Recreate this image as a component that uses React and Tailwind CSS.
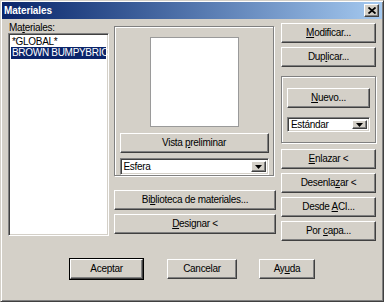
const BTN =
  "flex items-center justify-center bg-[#d4d0c8] border border-t-white border-l-white border-r-[#404040] border-b-[#404040] shadow-[inset_-1px_-1px_#808080] text-[10px] tracking-[-0.3px] leading-none text-black";
const SUNKEN =
  "border border-t-[#808080] border-l-[#808080] border-r-white border-b-white shadow-[inset_1px_1px_#404040,inset_-1px_-1px_#d4d0c8]";
const GROUP = "border border-[#808080] shadow-[inset_1px_1px_#ffffff,1px_1px_#ffffff]";

function U({ children }) {
  return <span className="underline underline-offset-[1px]">{children}</span>;
}

function Button({ className = "", children }) {
  return (
    <div className={`${BTN} ${className}`}>
      <span className="whitespace-pre">{children}</span>
    </div>
  );
}

function Combo({ className = "", value }) {
  return (
    <div className={`${SUNKEN} bg-white flex items-stretch p-[2px] ${className}`}>
      <div className="flex-1 flex items-center pl-[1px] text-[10px] tracking-[-0.3px] leading-none text-black">
        {value}
      </div>
      <div className="w-[15px] bg-[#d4d0c8] border border-t-white border-l-white border-r-[#404040] border-b-[#404040] shadow-[inset_-1px_-1px_#808080] flex items-center justify-center">
        <svg width="7" height="4" viewBox="0 0 7 4">
          <path d="M0 0H7L3.5 4Z" fill="#000" />
        </svg>
      </div>
    </div>
  );
}

export default function App() {
  return (
    <div
      className="w-[384px] h-[302px] bg-[#d4d0c8] border border-t-[#d4d0c8] border-l-[#d4d0c8] border-r-[#404040] border-b-[#404040] shadow-[inset_1px_1px_#ffffff,inset_-1px_-1px_#808080] p-[1px] flex flex-col overflow-hidden"
      style={{ fontFamily: '"Liberation Sans", Arial, sans-serif' }}
    >
      {/* Title bar */}
      <div className="h-[17px] bg-gradient-to-r from-[#0a246a] to-[#a6caf0] flex items-center justify-between pl-[2px] pr-[3px]">
        <span className="text-white font-bold text-[10px] tracking-[-0.1px] leading-none">Materiales</span>
        <div className="w-[15px] h-[13px] bg-[#d4d0c8] border border-t-white border-l-white border-r-[#404040] border-b-[#404040] shadow-[inset_-1px_-1px_#808080] flex items-center justify-center">
          <svg width="8" height="7" viewBox="0 0 8 7">
            <path d="M0.5 0.5L7.5 6.5M7.5 0.5L0.5 6.5" stroke="#000" strokeWidth="1.8" />
          </svg>
        </div>
      </div>

      {/* Main area */}
      <div className="flex items-start pl-[6px]">
        {/* Column 1 */}
        <div className="w-[101px] flex flex-col">
          <div className="h-[14px] flex items-end pl-[1px] text-[10px] tracking-[-0.3px] leading-none text-black">
            <span>
              Ma<U>t</U>eriales:
            </span>
          </div>
          <div className={`${SUNKEN} bg-white h-[203px] p-[2px] overflow-hidden`}>
            <div className="h-[11px] flex items-center whitespace-nowrap text-[10px] tracking-[-0.3px] leading-none text-black pl-[1px]">
              *GLOBAL*
            </div>
            <div className="h-[12px] flex items-center whitespace-nowrap text-[10px] tracking-[-0.3px] leading-none text-white bg-[#0a246a] pl-[1px]">
              BROWN BUMPYBRICK
            </div>
          </div>
        </div>

        {/* Column 2 */}
        <div className="w-[161px] ml-[5px] mt-[7px] flex flex-col">
          <div className={`${GROUP} h-[150px] w-[160px] flex flex-col items-center pt-[10px]`}>
            <div className="w-[89px] h-[90px] bg-white border border-[#9a9a9a]" />
            <Button className="w-[149px] h-[20px] mt-[6px]">
              Vista <U>p</U>reliminar
            </Button>
            <Combo className="w-[149px] h-[17px] mt-[5px]" value="Esfera" />
          </div>
          <Button className="w-[162px] h-[20px] mt-[14px]">
            Bi<U>b</U>lioteca de materiales...
          </Button>
          <Button className="w-[162px] h-[20px] mt-[4px]">
            <U>D</U>esignar &lt;
          </Button>
        </div>

        {/* Column 3 */}
        <div className="w-[95px] ml-[6px] mt-[4px] flex flex-col">
          <Button className="h-[20px]">
            <U>M</U>odificar...
          </Button>
          <Button className="h-[20px] mt-[4px]">
            Dup<U>l</U>icar...
          </Button>
          <div className={`${GROUP} h-[67px] mt-[9px] flex flex-col items-center pt-[11px]`}>
            <Button className="w-[83px] h-[20px]">
              <U>N</U>uevo...
            </Button>
            <Combo className="w-[83px] h-[15px] mt-[9px]" value="Estándar" />
          </div>
          <Button className="h-[20px] mt-[6px]">
            <U>E</U>nlazar &lt;
          </Button>
          <Button className="h-[20px] mt-[4px]">
            Desenla<U>z</U>ar &lt;
          </Button>
          <Button className="h-[20px] mt-[4px]">
            Desde <U>A</U>CI...
          </Button>
          <Button className="h-[20px] mt-[4px]">
            Por <U>c</U>apa...
          </Button>
        </div>
      </div>

      {/* Bottom buttons */}
      <div className="flex items-center pl-[67px] mt-[17px]">
        <div className="w-[75px] h-[22px] border border-black flex">
          <Button className="flex-1">Aceptar</Button>
        </div>
        <Button className="w-[70px] h-[20px] ml-[23px]">Cancelar</Button>
        <Button className="w-[56px] h-[20px] ml-[22px]">
          Ay<U>u</U>da
        </Button>
      </div>
    </div>
  );
}
